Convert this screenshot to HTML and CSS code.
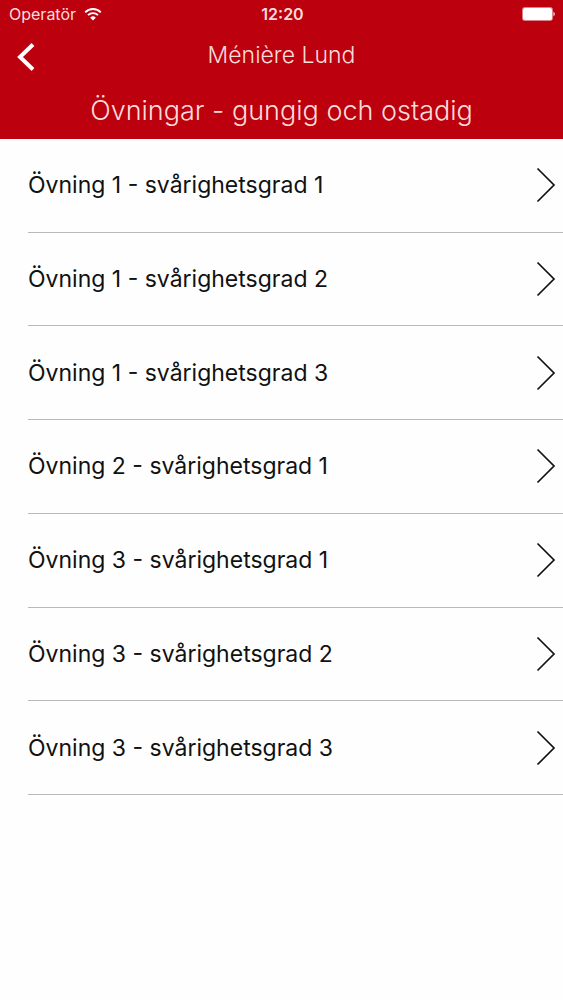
FILE: index.html
```html
<!DOCTYPE html>
<html lang="sv">
<head>
<meta charset="utf-8">
<meta name="viewport" content="width=device-width, initial-scale=1">
<title>Ménière Lund</title>
<link rel="stylesheet" href="styles.css">
</head>
<body>
<header class="header">
  <div class="status">
    <div class="carrier"><span>Operatör</span>
      <svg class="wifi" viewBox="0 0 18 13" aria-hidden="true"><path d="M1.200 4.300a11 11 0 0 1 15.600 0M4 7.200a7.100 7.100 0 0 1 10 0" fill="none" stroke="currentColor" stroke-width="1.900"/><path d="M6.200 9.700a4 4 0 0 1 5.600 0L9 12.500z" fill="currentColor"/></svg>
    </div>
    <time class="clock">12:20</time>
    <svg class="battery" viewBox="0 0 34 14" aria-hidden="true"><rect x=".5" y=".5" width="30" height="13" rx="2" fill="none" stroke="currentColor" stroke-opacity=".5"/><rect x="1" y="1" width="29" height="12" rx="1.500" fill="currentColor"/><path d="M31.500 4.500q2.500 2.500 0 5z" fill="currentColor"/></svg>
  </div>
  <div class="nav">
    <button class="back" aria-label="Tillbaka"><svg viewBox="0 0 20 30" aria-hidden="true"><path d="M17 2.500 4 15l13 12.500" fill="none" stroke="currentColor" stroke-width="4"/></svg></button>
    <div class="app-name">Ménière Lund</div>
  </div>
  <h1 class="title">Övningar - gungig och ostadig</h1>
</header>
<main>
  <ul class="list">
    <li><a class="row" href="#"><span>Övning 1 - svårighetsgrad 1</span><svg class="chevron" viewBox="0 0 20 36" aria-hidden="true"><path d="m1.500 1.500 16.500 16.500-16.500 16.500" stroke-width="1.700"/></svg></a></li>
    <li><a class="row" href="#"><span>Övning 1 - svårighetsgrad 2</span><svg class="chevron" viewBox="0 0 20 36" aria-hidden="true"><path d="m1.500 1.500 16.500 16.500-16.500 16.500" stroke-width="1.700"/></svg></a></li>
    <li><a class="row" href="#"><span>Övning 1 - svårighetsgrad 3</span><svg class="chevron" viewBox="0 0 20 36" aria-hidden="true"><path d="m1.500 1.500 16.500 16.500-16.500 16.500" stroke-width="1.700"/></svg></a></li>
    <li><a class="row" href="#"><span>Övning 2 - svårighetsgrad 1</span><svg class="chevron" viewBox="0 0 20 36" aria-hidden="true"><path d="m1.500 1.500 16.500 16.500-16.500 16.500" stroke-width="1.700"/></svg></a></li>
    <li><a class="row" href="#"><span>Övning 3 - svårighetsgrad 1</span><svg class="chevron" viewBox="0 0 20 36" aria-hidden="true"><path d="m1.500 1.500 16.500 16.500-16.500 16.500" stroke-width="1.700"/></svg></a></li>
    <li><a class="row" href="#"><span>Övning 3 - svårighetsgrad 2</span><svg class="chevron" viewBox="0 0 20 36" aria-hidden="true"><path d="m1.500 1.500 16.500 16.500-16.500 16.500" stroke-width="1.700"/></svg></a></li>
    <li><a class="row" href="#"><span>Övning 3 - svårighetsgrad 3</span><svg class="chevron" viewBox="0 0 20 36" aria-hidden="true"><path d="m1.500 1.500 16.500 16.500-16.500 16.500" stroke-width="1.700"/></svg></a></li>
  </ul>
</main>
</body>
</html>
```
FILE: styles.css
```css
* { box-sizing: border-box; }
body { margin: 0; background: #fefefe; color: #111; font-family: Inter, Roboto, sans-serif; }
.header { background: #bc000e; color: #fbdcda; padding-bottom: 8px; }
.status { display: grid; grid-template-columns: 1fr auto 1fr; align-items: center; height: 28px; padding: 0 7px 0 9px; font-size: 16px; }
.carrier { display: flex; align-items: center; gap: 8px; }
.wifi { width: 18px; height: 13px; color: #fff; }
.clock { font-weight: 600; }
.battery { width: 34px; height: 14px; justify-self: end; color: #fff; }
.nav { display: grid; grid-template-columns: 52px 1fr 52px; align-items: center; height: 54px; }
.back { border: 0; padding: 4px 0 0 16px; background: none; color: #fff; display: flex; cursor: pointer; }
.back svg { width: 20px; height: 30px; }
.app-name { text-align: center; font-size: 23px; font-weight: 300; line-height: 30px; }
.title { margin: 0; padding-top: 9px; text-align: center; font-size: 27px; font-weight: 300; line-height: 40px; }
.list { display: grid; grid-auto-rows: 1fr; min-height: 656px; list-style: none; margin: 0; padding: 0 0 0 28px; }
.row { display: flex; align-items: center; justify-content: space-between; height: 100%; padding-right: 7px; border-bottom: 1px solid #b9b9bb; color: inherit; text-decoration: none; font-size: 23px; }
.chevron { width: 20px; height: 36px; fill: none; stroke: #111; }
```
